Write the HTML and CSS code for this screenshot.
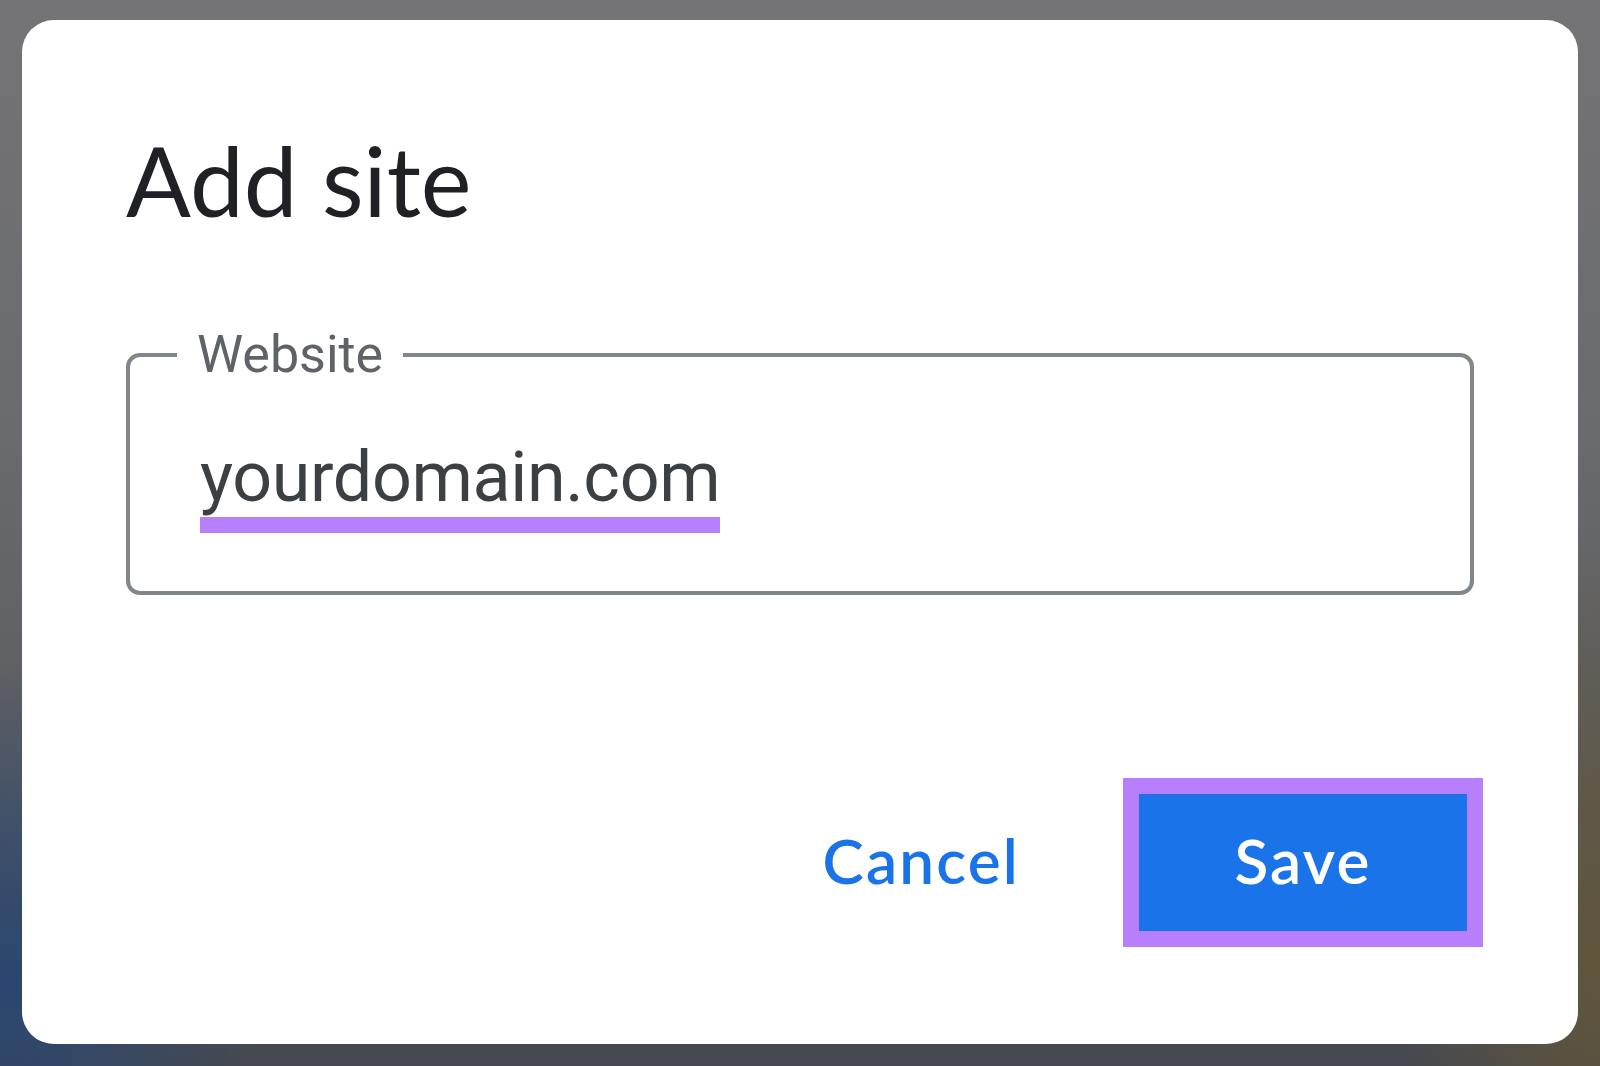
FILE: index.html
```html
<!DOCTYPE html>
<html lang="en">
<head>
<meta charset="utf-8">
<title>Add site</title>
<link rel="stylesheet" href="styles.css">
</head>
<body>
<div class="dialog">
  <h1 class="title">Add site</h1>
  <fieldset class="field">
    <legend class="field-label">Website</legend>
    <div class="field-value"><span class="value-text">yourdomain.com</span></div>
  </fieldset>
  <div class="actions">
    <button class="btn btn-text" type="button">Cancel</button>
    <button class="btn btn-primary" type="button">Save</button>
  </div>
</div>
</body>
</html>
```
FILE: styles.css
```css
html, body {
  margin: 0;
  padding: 0;
}
body {
  width: 1600px;
  height: 1066px;
  box-sizing: border-box;
  padding: 20px 22px 22px 22px;
  background:
    radial-gradient(ellipse 260px 320px at 0% 92%, rgba(40, 70, 115, 0.95), rgba(40, 70, 115, 0) 100%),
    radial-gradient(ellipse 200px 420px at 100% 90%, rgba(98, 86, 58, 0.95), rgba(98, 86, 58, 0) 100%),
    linear-gradient(180deg, #747477 0%, #6a6b6e 40%, #58595c 80%, #45484f 100%);
  font-family: "Roboto", "Liberation Sans", sans-serif;
}
.dialog {
  box-sizing: border-box;
  height: 1024px;
  background: #ffffff;
  border-radius: 32px;
  padding: 100px 95px 0 104px;
  display: flex;
  flex-direction: column;
}
.title {
  margin: 0;
  font-family: "Lato", "Liberation Sans", sans-serif;
  font-weight: 400;
  font-size: 96px;
  line-height: 120px;
  color: #202124;
}
.field {
  margin: 85px 9px 0 0;
  padding: 0;
  border: 4px solid #80868b;
  border-radius: 14px;
  height: 270px;
  box-sizing: border-box;
}
.field-label {
  margin-left: 47px;
  padding: 0 20px;
  font-family: "Roboto", "Liberation Sans", sans-serif;
  font-size: 52px;
  line-height: 60px;
  color: #5f6368;
}
.field-value {
  padding: 53px 0 0 70px;
}
.value-text {
  display: inline-block;
  font-family: "Roboto", "Liberation Sans", sans-serif;
  font-size: 70px;
  line-height: 79px;
  letter-spacing: -0.35px;
  color: #3c4043;
  border-bottom: 16px solid #b77ffc;
}
.actions {
  margin-top: 183px;
  display: flex;
  justify-content: flex-end;
  align-items: center;
  gap: 103px;
}
.btn {
  font-family: "Lato", "Liberation Sans", sans-serif;
  font-weight: 600;
  font-size: 62px;
  letter-spacing: 2.2px;
  border: none;
  background: none;
  padding: 0 0 6px 0;
  cursor: pointer;
}
.btn-text {
  color: #1a73e8;
}
.btn-primary {
  box-sizing: border-box;
  width: 360px;
  height: 169px;
  border: 16px solid #b77ffc;
  background: #1a73e8;
  color: #ffffff;
}
```
